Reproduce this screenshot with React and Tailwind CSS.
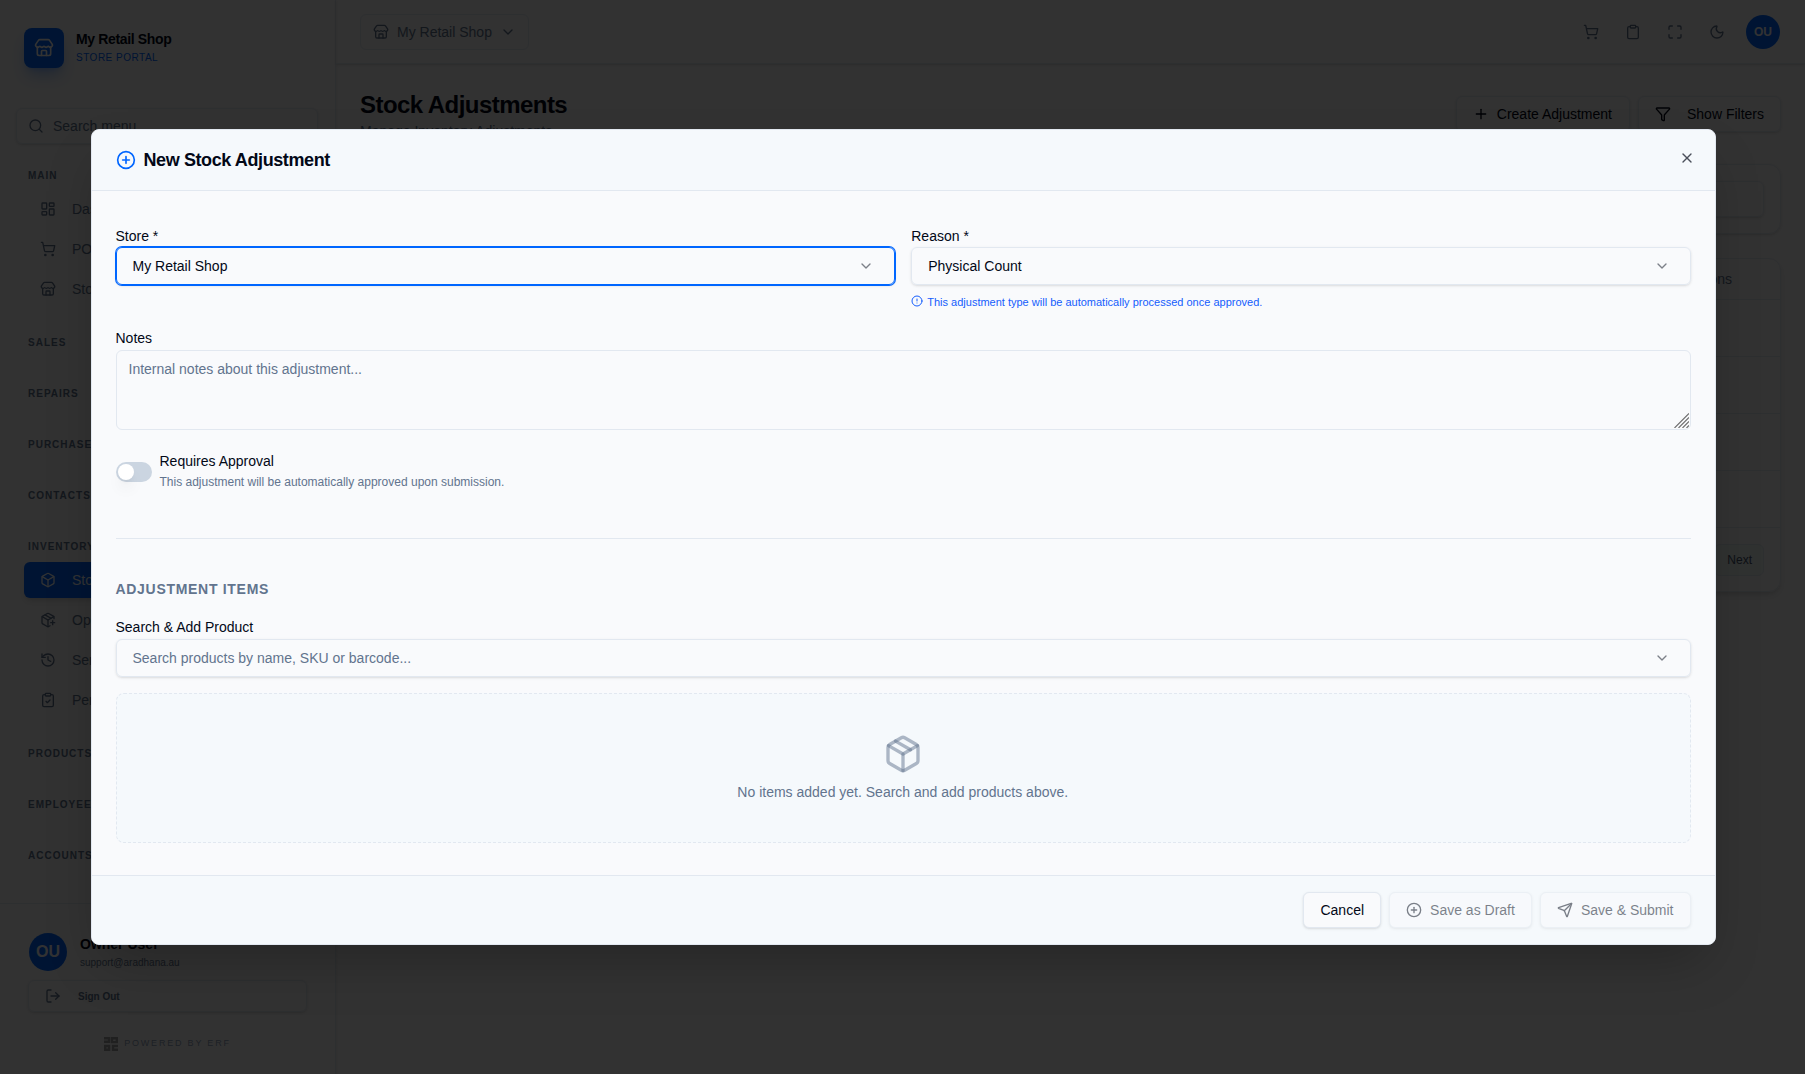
import React, { useState } from 'react';
import {
  Store, Search, LayoutDashboard, ShoppingCart, Box, PackagePlus, History, ClipboardCheck,
  LogOut, ChevronDown, Clipboard, Maximize, Moon, Plus, Filter, CirclePlus, CircleAlert,
  Package, Send, X,
} from 'lucide-react';

const NAV = [
  { label: 'Main', items: [
    { icon: LayoutDashboard, label: 'Dashboard' },
    { icon: ShoppingCart, label: 'POS' },
    { icon: Store, label: 'Stores' },
  ] },
  { label: 'Sales', items: [] },
  { label: 'Repairs', items: [] },
  { label: 'Purchases', items: [] },
  { label: 'Contacts', items: [] },
  { label: 'Inventory', items: [
    { icon: Box, label: 'Stock', active: true },
    { icon: PackagePlus, label: 'Opening' },
    { icon: History, label: 'Serials' },
    { icon: ClipboardCheck, label: 'Pending' },
  ] },
  { label: 'Products', items: [] },
  { label: 'Employees', items: [] },
  { label: 'Accounts', items: [] },
];

function NavItem({ item }) {
  const Icon = item.icon;
  return (
    <div className={`flex h-9 items-center gap-4 rounded-md px-4 text-sm ${item.active ? 'bg-[#0066ff] text-slate-50 shadow-md' : 'text-slate-500'}`}>
      <Icon className="h-4 w-4 flex-shrink-0" />
      <span className="truncate">{item.label}</span>
    </div>
  );
}

function Sidebar() {
  return (
    <aside className="flex h-full w-[336px] flex-shrink-0 flex-col border-r border-slate-200 bg-[#f8f8f8] shadow-sm">
      <div className="flex h-[96px] items-center gap-3 px-6">
        <div className="flex h-10 w-10 items-center justify-center rounded-lg bg-[#0066ff] text-white shadow-lg shadow-blue-500/40">
          <Store className="h-5 w-5" />
        </div>
        <div className="flex flex-col">
          <span className="text-sm leading-[18px] font-bold tracking-tight">My Retail Shop</span>
          <span className="pt-px text-[10px] leading-[18px] tracking-[0.5px] text-[#0066ff]">STORE PORTAL</span>
        </div>
      </div>

      <div className="px-4 pt-3">
        <div className="flex h-9 w-[302px] items-center gap-[9px] rounded-md border border-slate-200 px-[11px] text-sm text-slate-500 shadow-sm">
          <Search className="h-4 w-4" />
          Search menu...
        </div>
      </div>

      <nav className="flex flex-1 flex-col px-6 pt-[17px]">
        {NAV.map(group => (
          <div key={group.label} className="mb-[21px]">
            <div className="flex h-[30px] items-center pb-px pl-1 text-[10px] font-bold uppercase tracking-[1px] text-slate-500">
              {group.label}
            </div>
            <div className="flex flex-col gap-1">
              {group.items.map(item => <NavItem key={item.label} item={item} />)}
            </div>
          </div>
        ))}
      </nav>

      <div className="h-[171px] border-t border-slate-200 bg-[#fbfbfb] px-4 pt-[17px]">
        <div className="h-[103px] rounded-xl bg-[#f8f8f8] px-3 pt-3">
          <div className="flex items-center gap-[13px]">
            <div className="ml-px flex h-[38px] w-[38px] items-center justify-center rounded-full bg-[#0066ff] text-base font-bold text-slate-50">OU</div>
            <div className="flex flex-col">
              <span className="text-sm leading-5 font-bold">Owner User</span>
              <span className="pt-px text-[10px] leading-4 text-slate-500">support@aradhana.au</span>
            </div>
          </div>
          <div className="mt-[9px] flex h-8 items-center gap-[17px] rounded-md border border-slate-200 px-4 text-[10px] font-bold text-slate-500 shadow-sm">
            <LogOut className="h-4 w-4" />
            Sign Out
          </div>
        </div>
        <div className="mt-[13px] flex items-center justify-center gap-1.5 text-[9px] tracking-[1.8px] text-slate-400">
          <svg className="h-3.5 w-3.5 text-neutral-400" viewBox="0 0 14 14" fill="none" stroke="currentColor" strokeWidth="2.4">
            <path d="M0 1.2h5v3.6H0M9 1.2h3.8v3.9H8V0M1.2 9h3.9v3.8H1.2zM14 9H9v3.8h5" />
          </svg>
          POWERED BY ERF
        </div>
      </div>
    </aside>
  );
}

function Topbar() {
  return (
    <header className="flex h-16 flex-shrink-0 items-center justify-between border-b border-slate-200 px-6 shadow-sm">
      <div className="flex h-9 items-center gap-2 rounded-md border border-slate-200 px-3 text-sm text-slate-500">
        <Store className="h-4 w-4" />
        My Retail Shop
        <ChevronDown className="h-4 w-4" />
      </div>
      <div className="flex items-center gap-[26px] text-slate-500">
        <ShoppingCart className="h-4 w-4" />
        <Clipboard className="h-4 w-4" />
        <Maximize className="h-4 w-4" />
        <Moon className="h-4 w-4" />
        <div className="-ml-[5px] mr-px flex h-[34px] w-[34px] items-center justify-center rounded-full bg-[#0066ff] text-xs font-bold text-slate-50">OU</div>
      </div>
    </header>
  );
}

function Page() {
  return (
    <div className="flex min-w-0 flex-1 flex-col">
      <Topbar />
      <main className="flex flex-col px-6 pt-6">
        <div className="flex items-start justify-between">
          <div>
            <h1 className="text-2xl leading-[34px] font-bold tracking-[-0.55px]">Stock Adjustments</h1>
            <p className="text-sm leading-[18px] text-slate-500">Manage Inventory Adjustments</p>
          </div>
          <div className="flex gap-2 pt-2 text-sm">
            <div className="flex h-9 items-center gap-2 rounded-md border border-slate-200 pr-[17px] pl-4 shadow-sm">
              <Plus className="h-4 w-4" />Create Adjustment
            </div>
            <div className="flex h-9 items-center gap-4 rounded-md border border-slate-200 px-4 shadow-sm">
              <Filter className="h-4 w-4" />Show Filters
            </div>
          </div>
        </div>
        <div className="mt-6 rounded-xl border border-slate-200 p-4 shadow-sm">
          <div className="h-9 rounded-md border border-slate-200 shadow-sm" />
        </div>
        <div className="mt-6 flex h-[334px] flex-col rounded-xl border border-slate-200 shadow-md">
          <div className="flex h-[41px] items-center justify-end border-b border-slate-200 pr-12 text-sm text-slate-500">Actions</div>
          {[0, 1, 2, 3].map(row => <div key={row} className="h-[57px] border-b border-slate-200" />)}
          <div className="flex justify-end px-4 pt-4">
            <div className="flex h-8 items-center rounded-md border border-slate-200 bg-[#f0f7f5] pr-[11px] pl-3 text-xs text-slate-600">Next</div>
          </div>
        </div>
      </main>
    </div>
  );
}

function SelectBox({ value, placeholder, focused }) {
  return (
    <div className={`flex h-[38px] items-center justify-between rounded-md border px-4 pr-[20.5px] text-sm shadow-sm ${focused ? 'border-[#0066ff] ring-1 ring-[#0066ff]' : 'border-slate-200'}`}>
      <span className={value ? '' : 'text-slate-500'}>{value || placeholder}</span>
      <ChevronDown className="h-4 w-4 opacity-50" />
    </div>
  );
}

function ResizeGrip() {
  return (
    <svg className="pointer-events-none absolute right-[2.5px] bottom-0.5 h-[15px] w-[15px]" viewBox="0 0 15 15" stroke="#6b6b6b" strokeWidth="1.1">
      <path d="M0.5 15L15 0.5M4.5 15L15 4.5M8.5 15L15 8.5M12.5 15L15 12.5" />
    </svg>
  );
}

function StockAdjustmentDialog() {
  const [notes, setNotes] = useState('');
  return (
    <div className="flex h-[816px] w-[1625px] flex-col overflow-hidden rounded-lg border border-slate-200 bg-[#f9fafc] shadow-2xl">
      {/* Header */}
      <div className="flex h-[61px] flex-shrink-0 items-center justify-between border-b border-slate-200 bg-[#f5f9fc] pr-[24.5px] pl-[23.5px]">
        <div className="flex items-center gap-2">
          <CirclePlus className="h-5 w-5 text-[#0066ff]" />
          <h2 className="text-lg font-bold tracking-[-0.4px]">New Stock Adjustment</h2>
        </div>
        <X className="-mr-1 mb-1 h-4 w-4 text-[#020817] opacity-70" />
      </div>

      {/* Body */}
      <div className="flex flex-1 flex-col pt-9 pr-6 pl-[23.5px]">
        <div className="grid grid-cols-2 gap-4">
          <div>
            <label className="block h-5 text-sm leading-[18px]">Store *</label>
            <SelectBox value="My Retail Shop" focused />
          </div>
          <div>
            <label className="block h-5 text-sm leading-[18px]">Reason *</label>
            <SelectBox value="Physical Count" />
            <p className="mt-2 flex h-4 items-center gap-1 text-[11px] leading-[18px] font-medium text-[#155dfc]">
              <CircleAlert className="h-3 w-3" />
              <span className="pt-0.5">This adjustment type will be automatically processed once approved.</span>
            </p>
          </div>
        </div>

        <label className="mt-5 block h-[21px] text-sm leading-[18px]">Notes</label>
        <div className="relative h-20">
          <textarea
            value={notes}
            onChange={e => setNotes(e.target.value)}
            placeholder="Internal notes about this adjustment..."
            className="block h-20 w-full resize-none rounded-md border border-slate-200 px-3 py-2 text-sm placeholder:text-slate-500 focus:outline-none"
          />
          <ResizeGrip />
        </div>

        <div className="mt-[22px] flex items-center gap-2">
          <div className="flex h-5 w-9 items-center rounded-full bg-[#cbd5e1] px-0.5">
            <div className="h-4 w-4 rounded-full bg-white shadow-lg" />
          </div>
          <div>
            <div className="h-5 text-sm leading-[18px]">Requires Approval</div>
            <div className="text-xs leading-5 text-slate-500">This adjustment will be automatically approved upon submission.</div>
          </div>
        </div>

        <div className="mt-[46px] border-t border-slate-200" />

        <h3 className="mt-10 text-sm leading-5 font-bold tracking-[0.7px] text-slate-500">ADJUSTMENT ITEMS</h3>
        <label className="mt-5 block h-5 text-sm leading-[16px]">Search &amp; Add Product</label>
        <SelectBox placeholder="Search products by name, SKU or barcode..." />

        <div className="mt-4 flex h-[150px] flex-col items-center justify-center gap-2 rounded-lg border border-dashed border-slate-200 bg-[#f5f9fc] pr-px">
          <Package className="h-10 w-10 text-slate-500/50" />
          <p className="text-sm text-slate-500">No items added yet. Search and add products above.</p>
        </div>
      </div>

      {/* Footer */}
      <div className="flex h-[69px] flex-shrink-0 items-center justify-end gap-2 border-t border-slate-200 bg-[#f5f9fc] pr-[24.5px] text-sm">
        <button className="h-9 rounded-md border border-slate-200 bg-[#f9fafc] px-4 shadow">Cancel</button>
        <button disabled className="flex h-9 items-center gap-2 rounded-md border border-slate-200 bg-[#f9fafc] px-4 opacity-50 shadow">
          <CirclePlus className="h-4 w-4" />Save as Draft
        </button>
        <button disabled className="flex h-9 items-center gap-2 rounded-md border border-slate-200 bg-[#f9fafc] px-4 opacity-50 shadow">
          <Send className="h-4 w-4" />Save &amp; Submit
        </button>
      </div>
    </div>
  );
}

export default function App() {
  return (
    <div className="relative flex h-[1074px] w-[1805px] overflow-hidden bg-[#f8f8f8] font-['Liberation_Sans',Arial,sans-serif] text-[#020817]">
      <Sidebar />
      <Page />
      <div className="absolute inset-0 flex items-center justify-center bg-black/80 pl-[2px]">
        <StockAdjustmentDialog />
      </div>
    </div>
  );
}
